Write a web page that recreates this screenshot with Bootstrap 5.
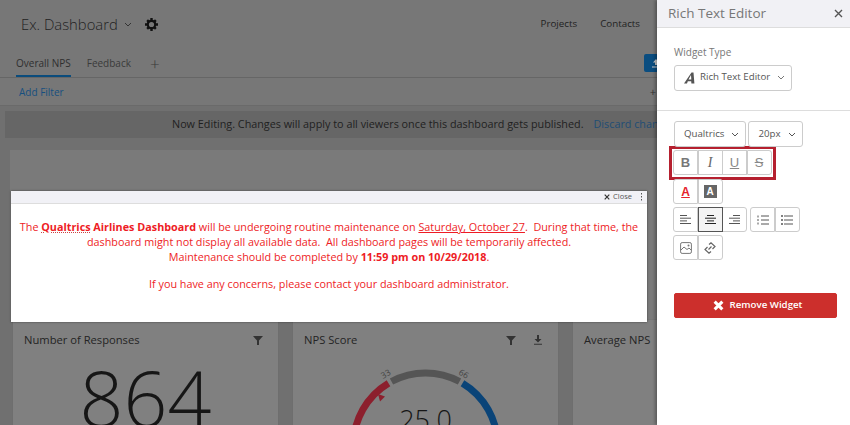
<!DOCTYPE html>
<html lang="en"><head><meta charset="utf-8"><title>Dashboard</title>
<link href="https://cdn.jsdelivr.net/npm/bootstrap@5.3.0/dist/css/bootstrap.min.css" rel="stylesheet">
<style>
html,body{height:425px;overflow:hidden;margin:0}
body{font-family:"Open Sans","Liberation Sans",sans-serif;background:#707070;color:#222}
.shell{height:425px;position:relative}
.dash{width:657px;height:425px;overflow:hidden;flex:none}
.dash-top{height:48px;background:#777;padding-left:21px}
.dash-title{font-size:14.800px;font-weight:300;color:#222;line-height:1}
.caret{width:8px;height:5px;margin-left:7px;flex:none}
.dash-top .caret{margin-left:6px}
.gear{margin-left:13px}
.top-link{font-size:9.800px;color:#222;position:relative}
.top-link+.top-link{margin-left:23px}
.top-links{padding-right:17px;padding-top:1px}
.tabs-row{height:30px;background:#777;border-bottom:1px solid #666;padding-left:16px;font-size:10px;color:#333}
.tab-on{height:29px;line-height:30px;border-bottom:2px solid #0b4c7c;color:#2f2f2f}
.tab-off{height:29px;line-height:30px;margin-left:16px;color:#3a3a3a}
.tab-plus{margin-left:19px;margin-bottom:5px;font-size:17px;font-weight:300;line-height:1;color:#3a3a3a}
.up-btn{width:24px;height:18px;background:#0a4d80;border-radius:2px;margin-right:-11px;margin-bottom:5px;color:#bbb}
.filter-row{height:28px;background:#777;border-bottom:1px solid #6a6a6a;padding:2px 1px 0 19px;font-size:10px;color:#164f7f}
.dots{color:#333;font-size:11px}
.notice{height:27px;margin:5px 0 0 5px;background:#666;font-size:10.800px;color:#1f1f1f;padding-left:167px;white-space:nowrap;overflow:hidden}
.discard{color:#1f4d75;margin-left:10px}
.hero{height:170px;margin:12px 0 0 10px;background:#7a7a7a}
.cards-row{gap:15px;margin:0 0 0 13px}
.tile{width:265px;height:110px;background:#808080;flex:none;padding:12px 11px;position:relative;overflow:hidden;box-shadow:0 0 1px #666}
.tile-head{font-size:11.200px;color:#242424;line-height:16px}
.tile-icon{margin-left:auto}
.tile-icon+.tile-icon{margin-left:17px}
.big-num{font-size:77px;font-weight:300;line-height:1;color:#161616;text-align:center;margin-top:11px}
.gauge{position:absolute;left:0;top:0}
.side{width:193px;height:425px;background:#fff;flex:none;box-shadow:-2px 0 3px rgba(0,0,0,.3);position:relative;color:#666}
.side-head{height:28px;background:#f1f1f5;border-bottom:1px solid #ddd;padding:0 7px 0 11px}
.side-title{font-size:13.500px;color:#777}
.side-sec{padding:16px 0 20px 17px;border-bottom:1px solid #ddd;height:83px}
.side-label{font-size:10px;color:#777;line-height:16px;margin-bottom:4px}
.pick{font-size:9.700px;color:#555;background:#fff;border:1px solid #ccc;border-radius:3px;padding:0 6px 0 9px;height:26px;box-shadow:none}
.tools{padding:10px 0 0 17px}
.font-row{gap:2px;height:25px}
.marked{width:107px;height:34px;border:3px solid #b5202f;margin-left:-5px;padding:1px;margin-top:0}
.gb{display:flex;flex:none}
.gb .tb{width:25px;height:25px;margin-left:-.5px;border:1px solid #ccc;background:#fff;color:#666;display:flex;align-items:center;justify-content:center;padding:0;font-size:12px;line-height:1}
.gb .tb:first-child{margin-left:0;border-radius:3px 0 0 3px}
.gb .tb:last-child{border-radius:0 3px 3px 0}
.gb .tb.on{background:#f4f4f4;border-color:#555;position:relative;z-index:1}
.row-a{margin-top:-1px;margin-left:-1px}
.row-b{margin-top:3px;gap:3px;margin-left:-1px}
.row-c{margin-top:3px;margin-left:-1px}
.tb-b{font-weight:700;font-size:13px!important;font-family:"Liberation Sans",sans-serif;color:#777!important}
.tb-i{font-style:italic;font-family:"Liberation Serif",serif;font-size:14px!important}
.tb-u{text-decoration:underline;font-family:"Liberation Sans",sans-serif;font-size:13px!important;color:#888!important}
.tb-s{text-decoration:line-through;font-family:"Liberation Sans",sans-serif;font-size:13px!important;color:#888!important}
.tb-c{font-weight:700;font-size:12px!important;color:#e5222c!important;text-decoration:underline;font-family:"Liberation Sans",sans-serif}
.a-box{background:#666;color:#fff;font-weight:700;font-size:10px;width:13px;height:13px;line-height:13px;text-align:center;font-family:"Liberation Sans",sans-serif}
.remove{position:absolute;left:17px;top:293px;width:163px;height:25px;background:#cc2f2c;border:1px solid #cc2f2c;border-radius:2px;color:#fff;font-size:9.700px;font-weight:600;padding:0 0 0 4px;gap:6px}
.remove:hover{background:#cc2f2c;color:#fff}
.popup{position:absolute;left:11px;top:191px;width:636px;height:131px;background:#fff;box-shadow:0 0 2px rgba(0,0,0,.5)}
.popup-bar{height:13px;background:#f1f1f6;border-bottom:1px solid #ddd;font-size:7.500px;color:#555;padding-right:3px;line-height:1;gap:3px}
.popup-body{padding-top:15px;text-align:center;color:#ee1c25;font-size:10.800px;line-height:15px;white-space:nowrap}
.popup-body p{margin:0}
.popup-body p+p{margin-top:12px}
.wavy{text-decoration:underline dotted #c44;text-underline-offset:1px}
.uline{text-decoration:underline}
</style></head>
<body>
<div class="shell d-flex">
  <div class="dash">
    <div class="dash-top d-flex align-items-center">
      <span class="dash-title">Ex. Dashboard</span>
      <svg class="caret" viewBox="0 0 8 5"><path d="M1 1l3 3 3-3" fill="none" stroke="#333" stroke-width="1"/></svg>
      <svg class="gear" width="13" height="13" viewBox="0 0 13 13"><circle cx="6.500" cy="6.500" r="3.700" fill="none" stroke="#111" stroke-width="2.200"/><path d="M5.300 0h2.400v2.500H5.300zM5.300 10.500h2.400V13H5.300zM0 5.300h2.500v2.400H0zM10.500 5.300H13v2.400h-2.500z" fill="#111"/><path d="M1.300 3l1.700-1.700 1.700 1.700-1.700 1.700zM8.300 10l1.700-1.700 1.700 1.700-1.700 1.700zM8.300 3L10 1.300 11.700 3 10 4.700zM1.300 10L3 8.300 4.700 10 3 11.700z" fill="#111"/></svg>
      <div class="top-links ms-auto d-flex"><span class="top-link">Projects</span><span class="top-link">Contacts</span></div>
    </div>
    <div class="tabs-row d-flex align-items-end">
      <span class="tab-on">Overall NPS</span><span class="tab-off">Feedback</span><span class="tab-plus">+</span>
      <span class="up-btn ms-auto d-flex align-items-center justify-content-center"><svg width="10" height="10" viewBox="0 0 10 10"><path d="M5 1L2 4.500h2V7h2V4.500h2zM1 8.500h8v1H1z" fill="#ccc"/></svg></span>
    </div>
    <div class="filter-row d-flex align-items-center"><span>Add Filter</span><span class="dots ms-auto">+</span></div>
    <div class="notice d-flex align-items-center"><span>Now Editing. Changes will apply to all viewers once this dashboard gets published.</span><span class="discard">Discard changes</span></div>
    <div class="hero"></div>
    <div class="cards-row d-flex">
      <div class="tile">
        <div class="tile-head d-flex align-items-center"><span>Number of Responses</span>
          <svg class="tile-icon" width="10" height="10" viewBox="0 0 10 10"><path d="M0 1h10L6 5.500V10H4V5.500z" fill="#333"/></svg>
          <span class="ps-1"></span></div>
        <div class="big-num">864</div>
      </div>
      <div class="tile">
        <svg class="gauge" width="265" height="110" viewBox="0 0 265 110">
          <g transform="translate(132.500,125)" fill="none" stroke-width="7">
            <path d="M-72 0A72 72 0 0 1-37 -61.800" stroke="#8c1f2d"/>
            <path d="M-34 -63.500A72 72 0 0 1 34 -63.500" stroke="#555"/>
            <path d="M37 -61.800A72 72 0 0 1 72 0" stroke="#0a4478"/>
          </g>
          <path d="M85 74l7 2.500-5 5z" fill="#8c1f2d"/>
          <text x="90" y="59" font-size="8.500" fill="#444" transform="rotate(-30 90 59)">33</text>
          <text x="165" y="54" font-size="8.500" fill="#444" transform="rotate(30 165 54)">66</text>
          <text x="132.500" y="110" font-size="27" font-weight="300" fill="#161616" text-anchor="middle">25.0</text>
        </svg>
        <div class="tile-head d-flex align-items-center position-relative"><span>NPS Score</span>
          <svg class="tile-icon" width="10" height="10" viewBox="0 0 10 10"><path d="M0 1h10L6 5.500V10H4V5.500z" fill="#333"/></svg>
          <svg class="tile-icon" width="10" height="10" viewBox="0 0 10 10"><path d="M4 0h2v4h2.500L5 7.500 1.500 4H4zM1 8.800h8v1H1z" fill="#333"/></svg>
          <span class="ps-1"></span></div>
      </div>
      <div class="tile"><div class="tile-head">Average NPS</div></div>
    </div>
  </div>

  <aside class="side">
    <div class="side-head d-flex align-items-center justify-content-between">
      <span class="side-title">Rich Text Editor</span>
      <svg width="9" height="9" viewBox="0 0 9 9"><path d="M1 1l7 7M8 1L1 8" stroke="#555" stroke-width="1.400"/></svg>
    </div>
    <div class="side-sec">
      <div class="side-label">Widget Type</div>
      <button class="btn pick d-inline-flex align-items-center" type="button">
        <svg width="12" height="12" viewBox="0 0 12 12" class="me-1"><path d="M0 11.500h3l.8-2.300h3.400l.2 2.300h3L9.500.5H7.500zM4.500 7.500L7 3l.3 4.500z" fill="#555" fill-rule="evenodd"/></svg><span>Rich Text Editor</span>
        <svg class="caret" viewBox="0 0 8 5"><path d="M1 1l3 3 3-3" fill="none" stroke="#777"/></svg>
      </button>
    </div>
    <div class="tools">
      <div class="font-row d-flex">
        <button class="btn pick d-inline-flex align-items-center" type="button">Qualtrics<svg class="caret" viewBox="0 0 8 5"><path d="M1 1l3 3 3-3" fill="none" stroke="#555"/></svg></button>
        <button class="btn pick d-inline-flex align-items-center" type="button">20px<svg class="caret" viewBox="0 0 8 5"><path d="M1 1l3 3 3-3" fill="none" stroke="#555"/></svg></button>
      </div>
      <div class="marked"><div class="gb">
        <span class="tb tb-b">B</span><span class="tb tb-i">I</span><span class="tb tb-u">U</span><span class="tb tb-s">S</span>
      </div></div>
      <div class="gb row-a">
        <span class="tb tb-c">A</span><span class="tb"><span class="a-box">A</span></span>
      </div>
      <div class="d-flex row-b">
        <div class="gb">
          <span class="tb"><svg width="11" height="9" viewBox="0 0 11 9"><path d="M0 .5h7M0 3.200h11M0 5.900h7M0 8.500h11" stroke="#555"/></svg></span>
          <span class="tb on"><svg width="11" height="9" viewBox="0 0 11 9"><path d="M2 .5h7M0 3.200h11M2 5.900h7M0 8.500h11" stroke="#222"/></svg></span>
          <span class="tb"><svg width="11" height="9" viewBox="0 0 11 9"><path d="M4 .5h7M0 3.200h11M4 5.900h7M0 8.500h11" stroke="#555"/></svg></span>
        </div>
        <div class="gb">
          <span class="tb"><svg width="12" height="10" viewBox="0 0 12 10"><path d="M4 1h8M4 5h8M4 9h8M1 .5v2M1 4v2M1 7.500v2" stroke="#555"/></svg></span>
          <span class="tb"><svg width="12" height="10" viewBox="0 0 12 10"><path d="M3 1h9M3 5h9M3 9h9" stroke="#555"/><path d="M0 .2h2v1.600H0zM0 4.200h2v1.600H0zM0 8.200h2v1.600H0z" fill="#555"/></svg></span>
        </div>
      </div>
      <div class="gb row-c">
        <span class="tb"><svg width="12" height="12" viewBox="0 0 12 12"><rect x=".6" y=".6" width="10.800" height="10.800" rx="1.500" fill="none" stroke="#777"/><path d="M1 8l3-3 3 2.500 2-1.500 2 2" fill="none" stroke="#777"/><circle cx="8.500" cy="3.500" r="1" fill="#777"/></svg></span>
        <span class="tb"><svg width="12" height="12" viewBox="0 0 12 12"><path d="M5 2.500L7 .8 11 4.500 8.500 7M7 9.500L5 11.200 1 7.500 3.500 5M4.500 7.500l3-3" fill="none" stroke="#666" stroke-width="1.200"/></svg></span>
      </div>
    </div>
    <button class="btn remove d-flex align-items-center justify-content-center" type="button">
      <svg width="11" height="11" viewBox="0 0 10 10"><path d="M1.500 1.500l7 7M8.500 1.500l-7 7" stroke="#fff" stroke-width="2.800"/></svg>Remove Widget
    </button>
  </aside>

  <div class="popup">
    <div class="popup-bar d-flex align-items-center justify-content-end">
      <svg width="6" height="6" viewBox="0 0 6 6"><path d="M.7.7l4.600 4.600M5.300.7L.7 5.300" stroke="#333" stroke-width="1.200"/></svg>
      <span>Close</span>
      <svg width="5" height="8" viewBox="0 0 5 8" class="ms-1"><path d="M2 0h1v1.500H2zM2 3h1v1.500H2zM2 6h1v1.500H2z" fill="#555"/></svg>
    </div>
    <div class="popup-body">
      <p>The <b><span class="wavy">Qualtrics</span> Airlines Dashboard</b> will be undergoing routine maintenance on <span class="uline">Saturday, October 27</span>.&nbsp; During that time, the<br>dashboard might not display all available data.&nbsp; All dashboard pages will be temporarily affected.<br>Maintenance should be completed by <b>11:59 pm on 10/29/2018</b>.</p>
      <p>If you have any concerns, please contact your dashboard administrator.</p>
    </div>
  </div>
</div>
</body></html>
